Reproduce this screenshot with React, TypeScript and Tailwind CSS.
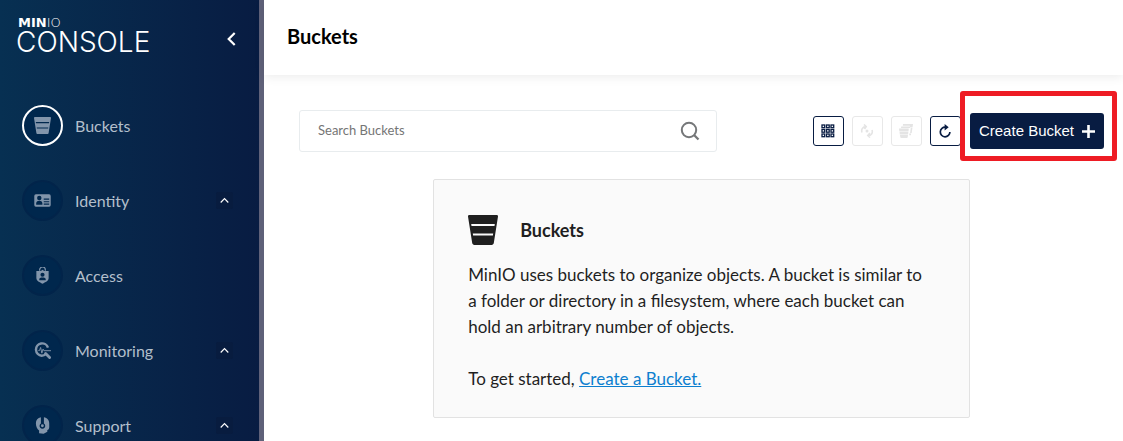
import React from 'react';

type IconProps = { className?: string };

function BucketIcon({ className }: IconProps) {
  return (
    <svg viewBox="0 0 30 30" className={className} fill="currentColor" aria-hidden="true">
      <path
        fillRule="evenodd"
        d="M1.400 0h27.200c.9 0 1.500.7 1.400 1.600l-4.200 26.500c-.2 1.100-1 1.900-2.100 1.900H6.300c-1.100 0-1.900-.8-2.100-1.900L0 1.600C-.1.700.5 0 1.400 0zM3.200 9l.3 2h23l.3-2zM4.800 18.500l.3 2h19.800l.3-2z"
      />
    </svg>
  );
}

function IdentityIcon({ className }: IconProps) {
  return (
    <svg viewBox="0 0 18 18" className={className} fill="currentColor" aria-hidden="true">
      <path
        fillRule="evenodd"
        d="M2 2.500h14a1.700 1.700 0 0 1 1.700 1.700v9.600a1.700 1.700 0 0 1-1.700 1.700H2A1.700 1.700 0 0 1 .3 13.800V4.200A1.700 1.700 0 0 1 2 2.500zM5.600 4a2.300 2.300 0 1 0 0 4.700 2.300 2.300 0 0 0 0-4.700zM2.300 13.500h6.600v-1.300c0-1.700-1-2.900-3.300-2.900s-3.300 1.200-3.300 2.900zM10.300 7v1.100h5.800V7zm0 2.700v1.100h5.800V9.700zm0 2.600v1.100h5.800v-1.100z"
      />
    </svg>
  );
}

function AccessIcon({ className }: IconProps) {
  return (
    <svg viewBox="0 0 18 18" className={className} fill="currentColor" aria-hidden="true">
      <path d="M6 4V3a3 3 0 0 1 6 0v1" fill="none" stroke="currentColor" strokeWidth="1.300" />
      <path
        fillRule="evenodd"
        d="M9 2.800l1.800 1.400h4.700v7.500c0 3-3.500 4.600-6.500 6-3-1.400-6.500-3-6.500-6V4.200h4.700zM9 6a2.200 2.200 0 1 0 0 4.400A2.200 2.200 0 0 0 9 6zm-3.400 7.900h6.800v-.8c0-1.400-1.200-2.100-3.400-2.100s-3.400.7-3.400 2.100z"
      />
    </svg>
  );
}

function MonitoringIcon({ className }: IconProps) {
  return (
    <svg viewBox="0 0 18 18" className={className} fill="none" stroke="currentColor" aria-hidden="true">
      <path d="M14.800 6A6.500 6.500 0 1 0 8.200 14.500c1.700 0 3.200-.6 4.300-1.600" strokeWidth="2.600" />
      <path d="M12.300 12.300l4.200 4.200" strokeWidth="3" strokeLinecap="round" />
      <path d="M4.600 9h1.200L7 5.800l1.300 6 1.300-4.300.9 1.700H18" strokeWidth="1" />
    </svg>
  );
}

function SupportIcon({ className }: IconProps) {
  return (
    <svg viewBox="0 0 18 18" className={className} fill="currentColor" aria-hidden="true">
      <path d="M7.300.2v6.700a3 3 0 1 0 3.200 0V.2c3.300.5 5.600 2.900 5.600 6.300 0 2 .2 3.400 0 4.700-.2 1.500-.8 2.400-2 2.500v2l-3.900 2.100-4.800-.5v-3C3.300 12.900 2 10 2 6.700 2 3.200 4 .7 7.300.2z" />
      <circle cx="8.900" cy="9.300" r="1.500" />
    </svg>
  );
}

function CaretUp() {
  return (
    <svg viewBox="0 0 9 9" className="size-[9px]" fill="none" stroke="currentColor" strokeWidth="1.200" aria-hidden="true">
      <path d="M.7 6.500L4.500 2.700l3.800 3.800" />
    </svg>
  );
}

const NAV = [
  { label: 'Buckets', icon: BucketIcon, active: true, group: false },
  { label: 'Identity', icon: IdentityIcon, active: false, group: true },
  { label: 'Access', icon: AccessIcon, active: false, group: false },
  { label: 'Monitoring', icon: MonitoringIcon, active: false, group: true },
  { label: 'Support', icon: SupportIcon, active: false, group: true },
];

function Sidebar() {
  return (
    <aside className="w-66 shrink-0 overflow-hidden border-r-5 border-[#5f6179] bg-linear-to-r from-[#073052] to-[#081c42]">
      <div className="flex items-start justify-between pt-[17px] pr-4 pl-4">
        <div className="text-white">
          <div className="pl-0.5 font-['DejaVu_Sans',sans-serif] text-[13px] leading-3">
            <span className="font-bold">MIN</span>
            <span className="font-extralight">IO</span>
          </div>
          <div className="font-[Inter,sans-serif] text-[28px] leading-[26px] font-light">CONSOLE</div>
        </div>
        <button type="button" aria-label="Collapse menu" className="mt-3 flex h-5 w-6 items-center justify-center text-white">
          <svg viewBox="0 0 9 14" className="h-3.5 w-[9px]" fill="none" stroke="currentColor" strokeWidth="2.200" aria-hidden="true">
            <path d="M7.700 1L1.700 7l6 6" />
          </svg>
        </button>
      </div>
      <nav className="mt-[50px] flex flex-col gap-[34px] pr-[26px] pl-[22px] font-[Lato,sans-serif]">
        {NAV.map(({ label, icon: Icon, active, group }) => (
          <a key={label} href="#" className="flex items-center text-base text-[#b3bfcb]">
            <span
              className={
                active
                  ? 'flex size-[41px] items-center justify-center rounded-full border-2 border-white bg-[#00274d] text-[#8295ab]'
                  : 'flex size-[41px] items-center justify-center rounded-full border-2 border-[#02244a] bg-[#00274d] text-[#8295ab]'
              }
            >
              <Icon className="size-[17px]" />
            </span>
            <span className="ml-3 flex-1">{label}</span>
            {group && (
              <span className="flex size-[17px] items-center justify-center rounded-xs bg-[#081c3f] text-white">
                <CaretUp />
              </span>
            )}
          </a>
        ))}
      </nav>
    </aside>
  );
}

function GridIcon() {
  return (
    <svg viewBox="0 0 14 14" className="size-3.5" fill="none" stroke="currentColor" strokeWidth="1.300" aria-hidden="true">
      {[1, 5.500, 10].map((y) =>
        [1, 5.500, 10].map((x) => <rect key={`${x}-${y}`} x={x} y={y} width="2.700" height="2.700" />),
      )}
    </svg>
  );
}

function LifecycleIcon() {
  return (
    <svg viewBox="0 0 14 14" className="size-3.5" fill="none" stroke="currentColor" strokeWidth="1.600" aria-hidden="true">
      <path d="M2 8.500C1 5.500 2.500 3 5.500 2.600M4 .5l2.200 2L4.500 5M12 6c1 3-.5 5.300-3.500 5.600M10 9l-2.200 2.500L10 13.500" />
      <circle cx="7" cy="7" r="1.500" fill="currentColor" stroke="none" />
    </svg>
  );
}

function MultiBucketIcon() {
  return (
    <svg viewBox="0 0 14 14" className="size-3.5" fill="currentColor" aria-hidden="true">
      <path d="M4 0h10l-.4 3H11l-.2-1.200H3.800zM2.200 2.400h9.300L11.200 4H2zM0 4.500h9.800L9.500 7.300H.3zM.5 7.800h8.900l-.3 2.600H.8zM1 11h8l-.3 2.200c-.1.500-.4.800-.9.800H2.200c-.5 0-.8-.3-.9-.8zM11.800 3.500h1.700l-.8 5.500h-1.600zM10.300 9.500h1.900l-.3 1.700h-1.700z" />
    </svg>
  );
}

function RefreshIcon() {
  return (
    <svg viewBox="0 0 14 14" className="size-3.5" aria-hidden="true">
      <path d="M7.500 3.200A4.800 4.800 0 1 0 11.900 8" fill="none" stroke="currentColor" strokeWidth="1.700" />
      <path d="M6.600 0l4.100 3.200-4.100 3.200z" fill="currentColor" />
    </svg>
  );
}

function IconButton({ label, disabled, children }: { label: string; disabled?: boolean; children: React.ReactNode }) {
  return (
    <button
      type="button"
      aria-label={label}
      disabled={disabled}
      className="flex h-[30px] w-[31px] items-center justify-center rounded-[3px] border border-[#081c42] bg-white text-[#081c42] disabled:border-[#e8e8e8] disabled:text-[#e4e4e4]"
    >
      {children}
    </button>
  );
}

function Toolbar() {
  return (
    <div className="flex items-center justify-between">
      <div className="flex h-[42px] w-[418px] items-center rounded-[3px] border border-[#e8ecee] bg-white pr-4 pl-[18px]">
        <input
          type="text"
          aria-label="Search Buckets"
          placeholder="Search Buckets"
          className="min-w-0 flex-1 text-[13px] text-[#333] outline-none placeholder:text-[#757575]"
        />
        <svg viewBox="0 0 20 20" className="size-5" fill="none" stroke="#757779" strokeWidth="2" aria-hidden="true">
          <circle cx="9" cy="9" r="7.200" />
          <path d="M13.800 13.800l4.700 4.700" strokeWidth="2.300" />
        </svg>
      </div>
      <div className="flex items-center gap-[9px]">
        <div className="flex gap-2">
          <IconButton label="Select buckets">
            <GridIcon />
          </IconButton>
          <IconButton label="Set lifecycle" disabled>
            <LifecycleIcon />
          </IconButton>
          <IconButton label="Set replication" disabled>
            <MultiBucketIcon />
          </IconButton>
          <IconButton label="Refresh">
            <RefreshIcon />
          </IconButton>
        </div>
        <div className="relative">
          <button
            type="button"
            className="flex h-9 items-center gap-2 rounded-[3px] bg-[#081c42] px-[9px] font-['Liberation_Sans',sans-serif] text-[15px] text-white"
          >
            Create Bucket
            <svg viewBox="0 0 13 13" className="size-[13px]" fill="none" stroke="currentColor" strokeWidth="2.600" aria-hidden="true">
              <path d="M6.500 0v13M0 6.500h13" />
            </svg>
          </button>
          <div className="pointer-events-none absolute -top-[22px] -right-[13px] -bottom-3 -left-2.5 rounded-[3px] border-5 border-[#ee1c24]" />
        </div>
      </div>
    </div>
  );
}

export default function App() {
  return (
    <div className="flex h-screen overflow-hidden bg-white font-[Lato,sans-serif] text-black">
      <Sidebar />
      <main className="min-w-0 flex-1">
        <header className="flex h-[75px] items-center px-[23px] pb-1 shadow-[0_2px_10px_rgba(0,0,0,0.08)]">
          <h1 className="text-xl font-bold">Buckets</h1>
        </header>
        <div className="pt-[35px] pr-[19px] pl-[35px]">
          <Toolbar />
          <section className="mx-auto mt-[27px] w-2/3 rounded-xs border border-[#e2e2e2] bg-[#fafafa] pr-11 pl-[34px] pt-[35px] pb-[25px] text-[#1f1f1f]">
            <div className="flex items-center gap-[22px]">
              <BucketIcon className="size-[30px]" />
              <h2 className="text-lg font-bold">Buckets</h2>
            </div>
            <div className="mt-[17px] text-[17px] leading-[26px]">
              <p>
                MinIO uses buckets to organize objects. A bucket is similar to a folder or directory in a filesystem, where each
                bucket can hold an arbitrary number of objects.
              </p>
              <p className="mt-[26px]">
                To get started,{' '}
                <a href="#" className="text-[#0d7fcf] underline">
                  Create a Bucket.
                </a>
              </p>
            </div>
          </section>
        </div>
      </main>
    </div>
  );
}
